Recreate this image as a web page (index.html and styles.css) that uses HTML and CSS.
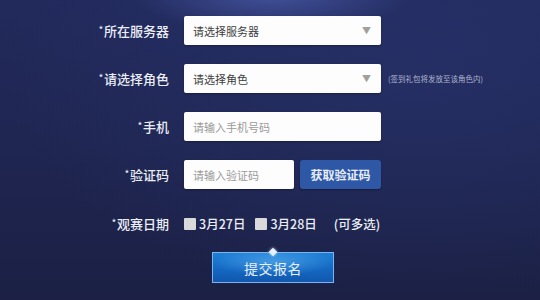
FILE: index.html
```html
<!DOCTYPE html>
<html lang="zh-CN">
<head>
<meta charset="utf-8">
<title>报名</title>
<link rel="stylesheet" href="styles.css">
</head>
<body>
<div class="page">
  <form class="form">
    <div class="row">
      <label class="label"><span class="star">*</span>所在服务器</label>
      <div class="select"><span class="sel-text">请选择服务器</span><span class="arrow">▼</span></div>
      <span></span>
    </div>
    <div class="row">
      <label class="label"><span class="star">*</span>请选择角色</label>
      <div class="select"><span class="sel-text">请选择角色</span><span class="arrow">▼</span></div>
      <span class="hint">(签到礼包将发放至该角色内)</span>
    </div>
    <div class="row">
      <label class="label"><span class="star">*</span>手机</label>
      <div class="input"><span class="ph">请输入手机号码</span></div>
      <span></span>
    </div>
    <div class="row">
      <label class="label"><span class="star">*</span>验证码</label>
      <div class="code-group">
        <div class="input code"><span class="ph">请输入验证码</span></div>
        <div class="code-btn">获取验证码</div>
      </div>
      <span></span>
    </div>
    <div class="row">
      <label class="label"><span class="star">*</span>观赛日期</label>
      <div class="dates">
        <span class="check"></span><span class="date">3月27日</span>
        <span class="check second"></span><span class="date">3月28日</span>
        <span class="multi">(可多选)</span>
      </div>
      <span></span>
    </div>
    <div class="submit-wrap">
      <div class="submit"><span class="gem"></span>提交报名</div>
    </div>
  </form>
</div>
</body>
</html>
```
FILE: styles.css
```css
html, body {
  margin: 0;
  padding: 0;
}
body {
  width: 540px;
  height: 300px;
  overflow: hidden;
  font-family: "Noto Sans CJK SC", "Noto Sans", sans-serif;
  background:
    radial-gradient(ellipse 140px 40px at 272px -6px, rgba(90,110,200,0.55), rgba(90,110,200,0) 100%),
    radial-gradient(ellipse 420px 240px at 420px 60px, rgba(40,52,110,0.6), rgba(40,52,110,0) 100%),
    linear-gradient(180deg, #222a5c 0%, #1f2652 45%, #1b2044 100%);
}
.page {
  padding-top: 16px;
}
.form {
  display: flex;
  flex-direction: column;
  gap: 19px;
}
.row {
  display: grid;
  grid-template-columns: 169px 197px auto;
  column-gap: 15px;
  height: 29px;
  align-items: center;
}
.row:nth-child(5) { margin-top: 1px; }
.label {
  text-align: right;
  color: #eceef6;
  font-size: 13px;
  font-weight: 500;
}
.star {
  font-size: 9px;
  vertical-align: 3px;
  margin-right: 1px;
}
.select, .input {
  height: 29px;
  background: #fdfdfd;
  border-radius: 2px;
  display: flex;
  align-items: center;
  justify-content: space-between;
  padding: 0 9px 0 9px;
  box-sizing: border-box;
  box-shadow: 0 1px 2px rgba(0,0,0,0.3);
}
.sel-text {
  color: #3e3e3e;
  font-size: 11px;
}
.ph {
  color: #9a9a9a;
  font-size: 11px;
}
.arrow {
  color: #a0a0a0;
  font-size: 9px;
  margin-right: 1px;
}
.hint {
  color: #aeb3cc;
  font-size: 7.5px;
  margin-left: -8px;
  white-space: nowrap;
}
.code-group {
  display: flex;
  gap: 6px;
  height: 29px;
}
.code {
  width: 110px;
}
.code-btn {
  flex: 1;
  background: #2e58a5;
  border-radius: 3px;
  color: #e8eefa;
  font-size: 12px;
  font-weight: 700;
  display: flex;
  align-items: center;
  justify-content: center;
  box-shadow: 0 1px 2px rgba(0,0,0,0.3);
}
.dates {
  display: flex;
  align-items: center;
  color: #eceef6;
  font-size: 12.5px;
  font-weight: 500;
  white-space: nowrap;
}
.check {
  width: 12px;
  height: 12px;
  background: #d9d9dc;
  border-radius: 1px;
  margin-right: 3px;
  margin-top: 1px;
}
.check.second {
  margin-left: 10px;
}
.multi {
  margin-left: 17px;
}
.submit-wrap {
  display: flex;
  justify-content: center;
  padding-left: 6px;
  margin-top: -5px;
}
.submit {
  position: relative;
  width: 122px;
  height: 31px;
  box-sizing: border-box;
  border: 1px solid #7fb2e6;
  background:
    radial-gradient(ellipse 60px 14px at 50% 30%, rgba(120,200,255,0.45), rgba(120,200,255,0) 100%),
    linear-gradient(180deg, #1d7fd6 0%, #1468c2 55%, #1257ad 100%);
  color: #e6f0fb;
  font-size: 14px;
  letter-spacing: 0.5px;
  display: flex;
  align-items: center;
  justify-content: center;
  box-shadow: 0 0 0 1px rgba(20,40,90,0.6);
}
.gem {
  position: absolute;
  left: 50%;
  top: -4px;
  width: 6px;
  height: 6px;
  margin-left: -3px;
  background: #e8f1ff;
  transform: rotate(45deg);
  box-shadow: 0 0 3px rgba(200,230,255,0.9);
}
```
